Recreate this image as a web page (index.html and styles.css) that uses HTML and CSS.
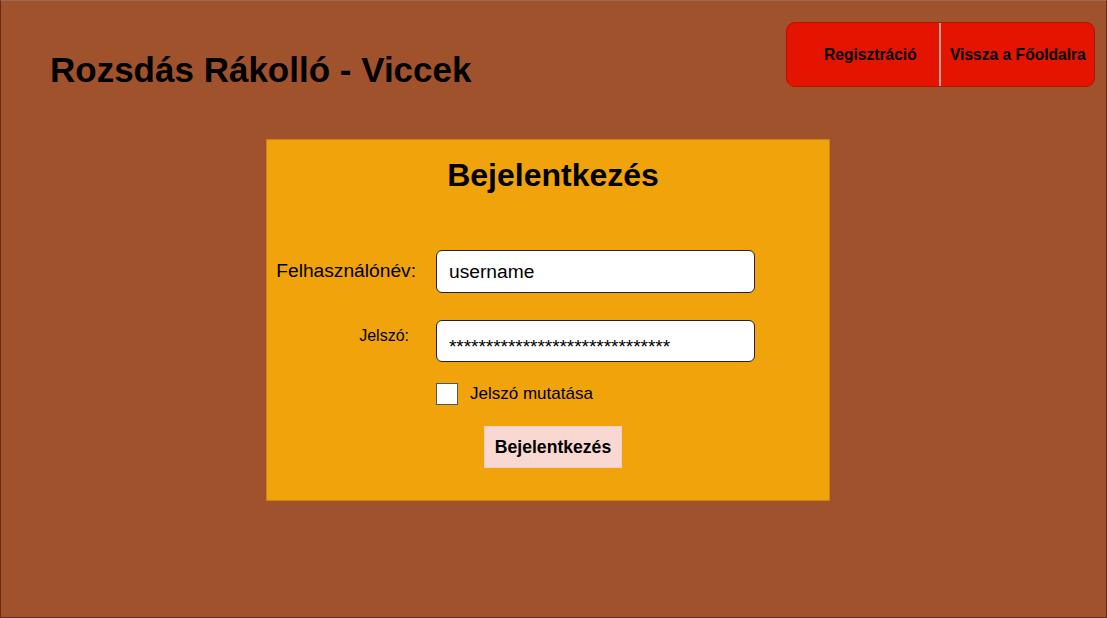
FILE: index.html
```html
<!DOCTYPE html>
<html lang="hu">
<head>
<meta charset="utf-8">
<title>Rozsdás Rákolló - Viccek</title>
<link rel="stylesheet" href="styles.css">
</head>
<body>
<div class="page">
  <header class="header">
    <h1 class="site-title">Rozsdás Rákolló - Viccek</h1>
    <nav class="nav">
      <a class="nav-btn nav-reg" href="#">Regisztráció</a>
      <a class="nav-btn nav-home" href="#">Vissza a Főoldalra</a>
    </nav>
  </header>
  <main class="main">
    <section class="card">
      <h2 class="card-title">Bejelentkezés</h2>
      <form class="form">
        <label class="label label-user" for="user">Felhasználónév:</label>
        <input class="field" id="user" type="text" value="username">
        <label class="label label-pass" for="pass">Jelszó:</label>
        <input class="field field-pass" id="pass" type="text" value="******************************">
        <span></span>
        <label class="show"><span class="box"></span>Jelszó mutatása</label>
        <span></span>
        <div class="submit-row"><button class="submit" type="button">Bejelentkezés</button></div>
      </form>
    </section>
  </main>
</div>
</body>
</html>
```
FILE: styles.css
```css
* { box-sizing: border-box; }
html, body { margin: 0; padding: 0; }
body {
  font-family: "Liberation Sans", Arial, sans-serif;
  color: #000;
  background: #A0522D;
}
.page {
  width: 1107px;
  height: 618px;
  background: #A0522D;
  border: 1px solid #6a2a10;
  border-top-color: #9a6a50;
  display: flex;
  flex-direction: column;
}
.header {
  display: flex;
  justify-content: space-between;
  align-items: flex-start;
  padding: 21px 11px 0 49px;
}
.site-title {
  margin: 29px 0 0 0;
  font-size: 35px;
  line-height: 38px;
  font-weight: bold;
}
.nav {
  display: flex;
  height: 65px;
  background: #E41400;
  border: 1px solid #B81200;
  border-radius: 9px;
  overflow: hidden;
}
.nav-btn {
  display: flex;
  align-items: center;
  color: #000;
  text-decoration: none;
  font-weight: bold;
  font-size: 15.6px;
}
.nav-reg {
  width: 154px;
  padding-left: 37px;
  border-right: 2px solid #B8A4A0;
}
.nav-home {
  width: 153px;
  padding-left: 9px;
}
.main {
  display: flex;
  justify-content: flex-start;
  padding: 50px 0 0 265px;
}
.card {
  width: 564px;
  height: 362px;
  background: #F0A30A;
  border: 1px solid #C8870C;
}
.card-title {
  margin: 17px 0 0 0;
  text-align: center;
  font-size: 32px;
  line-height: 37px;
  font-weight: bold;
  padding-left: 10px;
}
.form {
  display: grid;
  grid-template-columns: 149px 319px;
  column-gap: 20px;
  row-gap: 0;
  margin-top: 56px;
  padding-left: 0;
}
.label {
  text-align: right;
  align-self: center;
}
.label-user {
  font-size: 19.2px;
  margin-top: -2px;
}
.label-pass {
  font-size: 16px;
  padding-right: 7px;
  align-self: start;
  margin-top: 34px;
}
.field {
  width: 319px;
  height: 43px;
  border: 1px solid #222;
  border-radius: 6px;
  background: #fff;
  font-family: "Liberation Sans", Arial, sans-serif;
  font-size: 19.2px;
  padding: 0 12px;
  color: #000;
  outline: none;
}
.field-pass {
  margin-top: 27px;
  height: 42px;
  padding-top: 12px;
  letter-spacing: -0.1px;
}
.show {
  display: flex;
  align-items: center;
  margin-top: 21px;
  font-size: 17px;
  height: 22px;
}
.box {
  width: 22px;
  height: 22px;
  background: #fff;
  border: 1px solid #555;
  margin-right: 12px;
}
.submit-row {
  grid-column: 1 / 3;
  display: flex;
  justify-content: flex-start;
  padding-left: 217px;
  margin-top: 21px;
}
.submit {
  width: 138px;
  height: 42px;
  background: #FAD8D2;
  border: 1px solid #F6CFC6;
  font-family: "Liberation Sans", Arial, sans-serif;
  font-weight: bold;
  font-size: 17.6px;
  color: #000;
  padding: 0;
}
```
